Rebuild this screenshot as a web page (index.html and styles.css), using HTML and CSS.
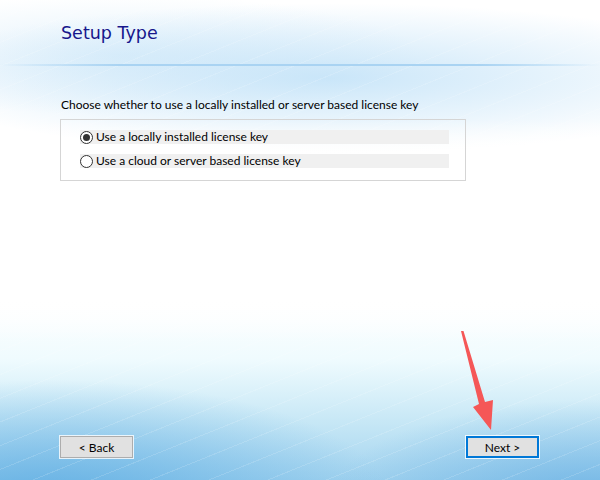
FILE: index.html
```html
<!DOCTYPE html>
<html lang="en">
  <head>
    <meta charset="UTF-8" />
    <meta name="viewport" content="width=device-width, initial-scale=1.0" />
    <title>Setup Type</title>
    <link rel="stylesheet" href="styles.css">
  </head>
  <body>
    <div class="dialog">
      <div class="header">
        <h1>Setup Type</h1>
      </div>
      <div class="content">
        <p class="prompt">Choose whether to use a locally installed or server based license key</p>
        <div class="group">
          <label class="option">
            <input type="radio" name="license" checked />
            <span class="radio"></span>
            Use a locally installed license key
          </label>
          <label class="option">
            <input type="radio" name="license" />
            <span class="radio"></span>
            Use a cloud or server based license key
          </label>
        </div>
      </div>
      <div class="footer">
        <button class="btn">&lt; Back</button>
        <button class="btn default">Next &gt;</button>
      </div>
      <!-- red pointer to the Next button -->
      <svg class="pointer" width="600" height="480" viewBox="0 0 600 480">
        <polygon points="461,331 463.5,331 485,402 493,400 491,430 473,407 479,404" fill="#f55757" />
      </svg>
    </div>
  </body>
</html>
```

FILE: styles.css
```css
body {
  margin: 0;
  font-family: Lato, "Noto Sans", sans-serif;
  font-size: 12px;
  color: #000;
}
.dialog {
  position: relative;
  width: 600px;
  height: 480px;
  display: flex;
  flex-direction: column;
  overflow: hidden;
  background:
    repeating-linear-gradient(-22deg, transparent 0 14px, rgba(255, 255, 255, 0.14) 14px 15px, transparent 15px 22px),
    radial-gradient(ellipse 340px 120px at 50px 500px, rgba(85, 168, 225, 0.8), transparent),
    radial-gradient(ellipse 260px 100px at 590px 500px, rgba(95, 170, 225, 0.7), transparent),
    radial-gradient(ellipse 430px 75px at 330px 78px, rgba(185, 222, 247, 0.75), transparent),
    radial-gradient(ellipse 300px 60px at 120px 55px, rgba(215, 236, 250, 0.7), transparent),
    linear-gradient(to bottom, rgba(255, 255, 255, 0) 0, #fff 130px, #fff 300px, #effbfe 360px, #c8e8f6 420px, #a2d3ef 480px);
  background-size: 600px 480px;
}
.dialog > * {
  position: relative;
}
/* the streaks only show in the lower band */
.dialog::before {
  content: "";
  position: absolute;
  left: 0;
  right: 0;
  top: 0;
  height: 340px;
  background: linear-gradient(to bottom, transparent 0, transparent 120px, #fff 160px, #fff 300px, rgba(255, 255, 255, 0) 340px);
}
.header {
  height: 64px;
  padding-left: 61px;
  border-bottom: 2px solid transparent;
  border-image: linear-gradient(to right, rgba(170, 212, 242, 0), #a9d3f2 20%, #a9d3f2 80%, rgba(170, 212, 242, 0)) 1;
}
h1 {
  margin: 0;
  padding-top: 23px;
  font-family: "DejaVu Sans", Verdana, sans-serif;
  font-size: 17.5px;
  font-weight: normal;
  line-height: 20px;
  color: #17178c;
}
.content {
  padding: 31px 0 0 61px;
}
.prompt {
  margin: 0;
  line-height: 16px;
}
.group {
  margin-top: 6px;
  margin-left: -1px;
  width: 369px;
  padding: 10px 16px 12px 19px;
  border: 1px solid #d5d5d5;
  display: flex;
  flex-direction: column;
  gap: 10px;
}
.option {
  display: flex;
  align-items: center;
  height: 14px;
  line-height: 14px;
  background: #f0f0f0;
  white-space: nowrap;
}
.option input {
  display: none;
}
.radio {
  box-sizing: border-box;
  width: 13px;
  height: 13px;
  margin-right: 3px;
  border: 1px solid #333;
  border-radius: 50%;
  background: #fff;
  display: flex;
  align-items: center;
  justify-content: center;
}
.option input:checked + .radio::after {
  content: "";
  width: 7px;
  height: 7px;
  border-radius: 50%;
  background: #333;
}
.footer {
  margin-top: auto;
  padding: 0 61px 22px 60px;
  display: flex;
  justify-content: space-between;
}
.btn {
  box-sizing: border-box;
  width: 73px;
  height: 22px;
  padding: 0;
  font-family: Lato, "Noto Sans", sans-serif;
  font-size: 12px;
  color: #000;
  background: #e1e1e1;
  border: 1px solid #adadad;
  outline: 1px solid rgba(255, 255, 255, 0.8);
}
.btn.default {
  border: 2px solid #0078d7;
}
.pointer {
  position: absolute;
  left: 0;
  top: 0;
}
```
